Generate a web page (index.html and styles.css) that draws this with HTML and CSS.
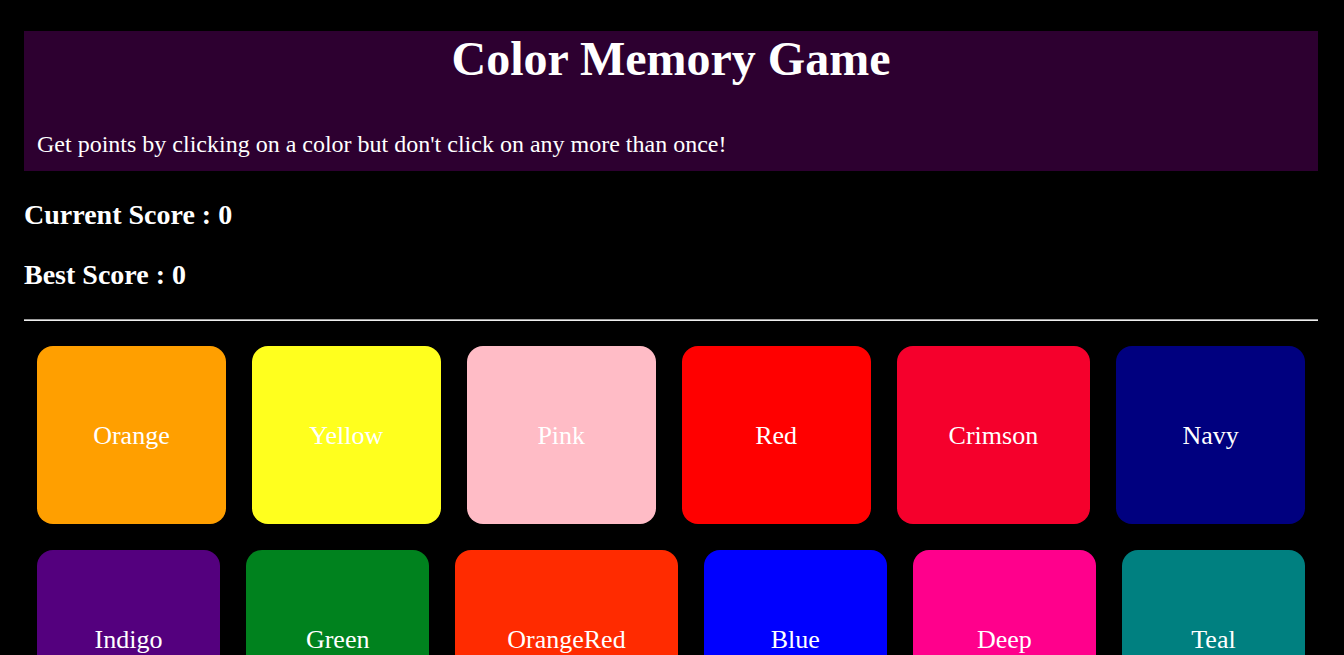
FILE: index.html
```html
<!DOCTYPE html>
<html lang="en">
<head>
<meta charset="utf-8">
<title>Color Memory Game</title>
<link rel="stylesheet" href="styles.css">
</head>
<body>
  <header class="top">
    <h1 class="title">Color Memory Game</h1>
    <p class="intro">Get points by clicking on a color but don't click on any more than once!</p>
  </header>
  <h2 class="score">Current Score : 0</h2>
  <h2 class="score">Best Score : 0</h2>
  <hr class="rule">
  <main class="board">
    <div class="row">
      <div class="card c-orange">Orange</div>
      <div class="card c-yellow">Yellow</div>
      <div class="card c-pink">Pink</div>
      <div class="card c-red">Red</div>
      <div class="card c-crimson">Crimson</div>
      <div class="card c-navy">Navy</div>
    </div>
    <div class="row">
      <div class="card c-indigo">Indigo</div>
      <div class="card c-green">Green</div>
      <div class="card c-orangered">OrangeRed</div>
      <div class="card c-blue">Blue</div>
      <div class="card c-deeppink">Deep Pink</div>
      <div class="card c-teal">Teal</div>
    </div>
  </main>
</body>
</html>
```
FILE: styles.css
```css
html, body {
  background: #000;
}
body {
  margin: 0;
  padding: 31px 26px 0 24px;
  color: #fff;
  font-family: "Liberation Serif", "Times New Roman", serif;
}
.top {
  background: #2d0030;
  padding: 0 13px 13px;
}
.title {
  margin: 0;
  text-align: center;
  font-size: 48px;
  font-weight: bold;
}
.intro {
  margin: 45px 0 0;
  font-size: 24px;
}
.score {
  margin: 28px 0;
  font-size: 28px;
  font-weight: bold;
}
.rule {
  margin: 28px 0 12px;
  border: 0;
  border-top: 1px solid #9a9a9a;
  border-bottom: 1px solid #eeeeee;
  height: 0;
}
.row {
  display: flex;
}
.card {
  flex: 1 1 0;
  margin: 13px;
  padding: 75px 52px 73px;
  border-radius: 16px;
  text-align: center;
  font-size: 26px;
  color: #fff;
}
.c-orange { background: #ff9f00; }
.c-yellow { background: #ffff1e; }
.c-pink { background: #ffbcc6; }
.c-red { background: #ff0000; }
.c-crimson { background: #f5002c; }
.c-navy { background: #00007f; }
.c-indigo { background: #54007e; }
.c-green { background: #00821e; }
.c-orangered { background: #ff2b00; }
.c-blue { background: #0000ff; }
.c-deeppink { background: #ff008c; }
.c-teal { background: #008080; }
```
